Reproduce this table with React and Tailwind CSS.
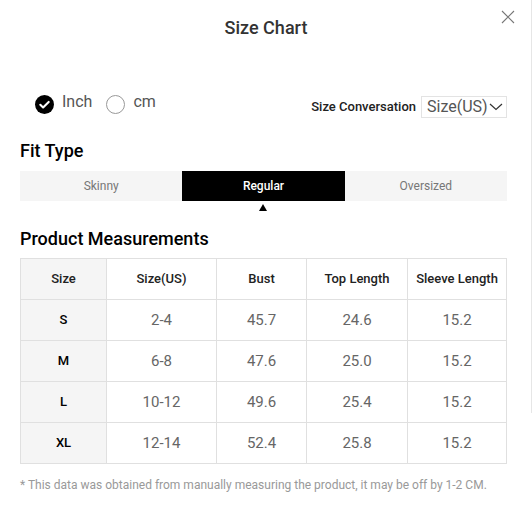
import React, { useState } from 'react';

const rows = [
  ['S', '2-4', '45.7', '24.6', '15.2'],
  ['M', '6-8', '47.6', '25.0', '15.2'],
  ['L', '10-12', '49.6', '25.4', '15.2'],
  ['XL', '12-14', '52.4', '25.8', '15.2'],
];

const heads = ['Size', 'Size(US)', 'Bust', 'Top Length', 'Sleeve Length'];
const fits = ['Skinny', 'Regular', 'Oversized'];

const Radio = ({ checked, label, onClick }) => (
  <button onClick={onClick} className="flex items-center gap-[8px]">
    {checked ? (
      <svg width="19" height="19" viewBox="0 0 19 19">
        <circle cx="9.5" cy="9.5" r="9.5" fill="#000" />
        <path d="M5.3 9.8l2.8 2.7 5.6-5.6" fill="none" stroke="#fff" strokeWidth="2.1" strokeLinecap="round" strokeLinejoin="round" />
      </svg>
    ) : (
      <span className="w-[19px] h-[19px] rounded-full border border-[#999]" />
    )}
    <span className="text-[16px] leading-[18px] text-[#555] -mt-[4px]">{label}</span>
  </button>
);

export default function App() {
  const [unit, setUnit] = useState('inch');
  const [fit, setFit] = useState('Regular');

  return (
    <div className="relative w-[532px] h-[510px] bg-white overflow-hidden font-['Roboto',sans-serif]">
      {/* scrollbar edge */}
      <div className="absolute right-0 top-0 h-[413px] w-px bg-[#e6e6e6]" />

      <button className="absolute top-[10px] right-[17px]">
        <svg width="14" height="14" viewBox="0 0 14 14">
          <path d="M1 1l12 12M13 1L1 13" stroke="#777" strokeWidth="1.1" />
        </svg>
      </button>

      <h2 className="pt-[17px] text-center text-[18px] leading-[22px] font-medium text-[#333]">Size Chart</h2>

      <div className="px-5 pr-[25px]">
        {/* units + size conversion */}
        <div className="mt-[51px] flex items-center justify-between">
          <div className="flex items-center gap-[14px] pl-[15px]">
            <Radio checked={unit === 'inch'} label="Inch" onClick={() => setUnit('inch')} />
            <Radio checked={unit === 'cm'} label="cm" onClick={() => setUnit('cm')} />
          </div>
          <div className="flex items-center gap-[5px] mt-[6px]">
            <span className="text-[13px] font-medium text-[#222]">Size Conversation</span>
            <div className="flex items-center h-[22px] w-[86px] border border-[#e3e3e3] pl-[5px]">
              <span className="text-[16px] leading-[20px] text-[#555]">Size(US)</span>
              <svg width="14" height="8" viewBox="0 0 14 8" className="ml-[1px]">
                <path d="M1 1l6 5.5L13 1" fill="none" stroke="#333" strokeWidth="1.2" />
              </svg>
            </div>
          </div>
        </div>

        <h3 className="mt-[22px] text-[18px] leading-[22px] font-medium text-black">Fit Type</h3>

        <div className="mt-[9px] grid grid-cols-3 h-[30px] bg-[#f5f5f5]">
          {fits.map((f) => (
            <button
              key={f}
              onClick={() => setFit(f)}
              className={`text-[12px] ${fit === f ? 'bg-black text-white font-medium' : 'text-[#777]'}`}
            >
              {f}
            </button>
          ))}
        </div>
        <div className="grid grid-cols-3 h-[10px]">
          {fits.map((f) => (
            <div key={f} className="flex justify-center pt-[3px]">
              {fit === f && (
                <svg width="8" height="7" viewBox="0 0 8 7">
                  <path d="M4 0L8 7H0z" fill="#000" />
                </svg>
              )}
            </div>
          ))}
        </div>

        <h3 className="mt-[17px] text-[18px] leading-[22px] font-medium text-black">Product Measurements</h3>

        <table className="mt-[8px] w-full table-fixed border-collapse">
          <colgroup>
            <col className="w-[86px]" />
            <col className="w-[110px]" />
            <col className="w-[90px]" />
            <col className="w-[101px]" />
            <col />
          </colgroup>
          <thead>
            <tr className="h-[41px]">
              {heads.map((h, i) => (
                <th
                  key={h}
                  className={`border border-[#e0e0e0] text-[13px] font-medium text-[#222] ${i === 0 ? 'bg-[#f5f5f5]' : ''}`}
                >
                  {h}
                </th>
              ))}
            </tr>
          </thead>
          <tbody>
            {rows.map((r) => (
              <tr key={r[0]} className="h-[41px]">
                {r.map((c, i) => (
                  <td
                    key={i}
                    className={`border border-[#e0e0e0] text-center ${
                      i === 0 ? 'bg-[#f5f5f5] text-[13px] font-medium text-black' : 'text-[15px] text-[#666]'
                    }`}
                  >
                    {c}
                  </td>
                ))}
              </tr>
            ))}
          </tbody>
        </table>

        <p className="mt-[14px] text-[12px] leading-[14px] text-[#999]">
          * This data was obtained from manually measuring the product, it may be off by 1-2 CM.
        </p>
      </div>
    </div>
  );
}
